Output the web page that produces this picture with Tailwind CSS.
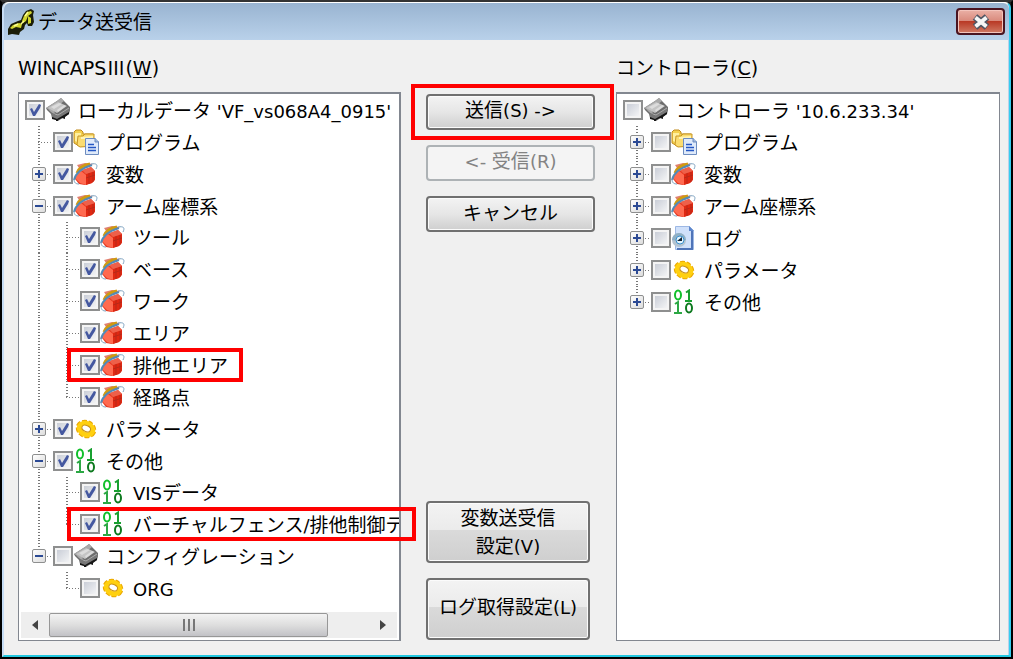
<!DOCTYPE html>
<html lang="ja">
<head>
<meta charset="utf-8">
<title>データ送受信</title>
<script src="https://cdn.jsdelivr.net/npm/@tailwindcss/browser@4"></script>
</head>
<body class="bg-[#1c1c1c] font-['Noto_Sans_CJK_JP',sans-serif] text-[19px] leading-6 text-black">

<svg class="hidden" aria-hidden="true">
  <symbol id="i-box" viewBox="0 0 26 26">
    <path d="M1 11 12 4l4-3 3 3 6 6v3l-1 4-11 7-6-3-1-4-4-4z" fill="#6d6d6d"/>
    <path d="M1 11 12 4l4-3 3 3-10 8 1 6-4-3-3-3z" fill="#a9a9a9"/>
    <path d="M3 11 13 5l9 4-10 7z" fill="#c4c4c4"/>
    <path d="M6 10l8-4 3 1-8 5zM12 13l7-5 2 1-8 6z" fill="#dcdcdc"/>
    <path d="M7 16l5 2 12-8 1 3-2 4-10 6-6-3z" fill="#777"/>
    <path d="M7 20l5 2 12-7v2l-4 3v2l-3-1-4 2v1h-2v-1l-4-1z" fill="#161616"/>
    <path d="M10 17l3 1 11-7" stroke="#aaa" fill="none"/>
  </symbol>
  <symbol id="i-folder" viewBox="0 0 26 26">
    <path d="M1 3 3 1h5l2 2v2h10v12H6l-5-3z" fill="#f4d04e" stroke="#c08a1c"/>
    <path d="M2 4h6v11l-6-3z" fill="#fff0a0"/>
    <path d="M5 7h5l2-2h9v12l-14 1-3-2z" fill="#fbdc70" stroke="#c89624"/>
    <path d="M8 8l12-1v3H8z" fill="#fff3b5"/>
    <path d="M12.500 9.500H22l3.500 3.500v12.500h-13z" fill="#dfeafa" stroke="#6d8cc0"/>
    <path d="M22 9v4h4" fill="#9fb8de" stroke="#6d8cc0"/>
    <path d="M15 15.500h6M15 18.500h8M15 21.500h8" stroke="#2457c5" stroke-width="1.500"/>
  </symbol>
  <symbol id="i-cube" viewBox="0 0 26 26">
    <path d="M4 4 12 2l8 1-5 3-9 1z" fill="#e08070"/>
    <path d="M3 15 8 10l10-4 4 4v9l-3 3-7 2-6-1-4-5z" fill="#e63a22"/>
    <path d="M3 15 8 10l5 4v10l-6-2-4-4z" fill="#ff6a50"/>
    <path d="M13 13l9-3v8l-3 4-6 2z" fill="#e02812"/>
    <path d="M16 12v11M20 11v10M13 17l9-3" stroke="#b82818" fill="none"/>
    <path d="M9 9 18 6l4 4-9 3z" fill="#ee604a"/>
    <path d="M4 12C6 7 11 4 17 3" fill="none" stroke="#cf9a10" stroke-width="3"/>
    <path d="M1 19C3 11 9 7 19 4" fill="none" stroke="#5489b5" stroke-width="2"/>
    <path d="M18 3c6-1 7 1 5 5M1 18c0 4 2 5 5 5" fill="none" stroke="#7da2c0"/>
  </symbol>
  <symbol id="i-gear" viewBox="0 0 26 26">
    <g transform="rotate(25 13 13)">
      <ellipse cx="13" cy="13" rx="8" ry="6.500" fill="none" stroke="#eba800" stroke-width="5" stroke-dasharray="4 1.500"/>
      <ellipse cx="13" cy="13" rx="7" ry="5.500" fill="#fff" stroke="#ffd010" stroke-width="5"/>
      <ellipse cx="13" cy="12.500" rx="4.500" ry="3" fill="#fff" stroke="#c99218"/>
    </g>
  </symbol>
  <symbol id="i-bits" viewBox="0 0 26 26" fill="none">
    <ellipse cx="7" cy="6" rx="3" ry="4.500" stroke="#12c02c" stroke-width="2"/>
    <path d="M15 3.500l3-2V12m-4 0h7" stroke="#18a030" stroke-width="2"/>
    <path d="M4 15l3-2v11m-4 0h8" stroke="#2ca844" stroke-width="2"/>
    <ellipse cx="18" cy="19" rx="3" ry="4.500" stroke="#0e7a20" stroke-width="2"/>
  </symbol>
  <symbol id="i-log" viewBox="0 0 26 26">
    <path d="M4.500 1.500h14l4 4v19h-18z" fill="#cfe0fa" stroke="#9db8e4"/>
    <path d="M21 6v18H6" fill="none" stroke="#4f74b8" stroke-width="2"/>
    <path d="M18 1v5h5" fill="#5d86cc"/>
    <circle cx="8" cy="15" r="7" fill="#b4c3d0"/>
    <path d="M1 15a7 7 0 0 1 14 0l-7 1z" fill="#8fb0c6"/>
    <circle cx="9" cy="15" r="4" fill="#e4f4ff" stroke="#3c92d0"/>
    <path d="M6 16l5-4v4z" fill="#102030"/>
  </symbol>
  <symbol id="i-tick" viewBox="0 0 20 20">
    <path d="M5 9l2-1 2 4 5-8 2 1-1 3-5 8H8z" fill="#4458a0"/>
  </symbol>
</svg>

<main class="flex min-h-screen flex-col border-2 border-black border-t-[#333]">
 <div class="flex flex-1 flex-col rounded-t-md border-t border-r-2 border-b-2 border-l-2 border-t-white border-r-[#35cdf0] border-b-[#22c8e0] border-l-[#c6dcf4] bg-[#f0f0f0]">
  <header class="flex h-[37px] items-center rounded-t-md bg-linear-to-b from-[#99b4d1] to-[#b9d1ea] pr-1 pl-1">
    <svg class="size-[26px]" viewBox="0 0 26 26" aria-hidden="true">
      <path d="M0 20l3-5 7-3 3-1 2-5 3-4 5-2 3 2-1 4 1 7-2 4h-4l-1-3-2 2-1 4-4 3-1 3-7-1-4 1-3-1z" fill="#1c1e08"/>
      <path d="M2 19l3-3 6-2 3 1-1 4-5-1-4 2zM14 12l2-5 3-4 4-1 1 2-4 3-2 5-3 2zM20 7l3 2v5l-3 1z" fill="#d2d630"/>
      <path d="M13 15l3-3M17 7l3-4M6 17l4-2" stroke="#fdff90" stroke-width="1.500"/>
    </svg>
    <h1 class="ml-1 flex-1 pb-0.5">データ送受信</h1>
    <button type="button" aria-label="閉じる" class="grid h-[27px] w-[49px] place-items-center rounded-sm border-2 border-[#4a1420] bg-[linear-gradient(#eab0a6,#d98a7c_48%,#b93a26_50%,#d07a64)] shadow-[inset_0_0_0_1px_#f3c4bc]">
      <svg class="h-4 w-5" viewBox="0 0 20 16" aria-hidden="true">
        <path d="M4 3l12 10M16 3L4 13" stroke="#4f5664" stroke-width="7"/>
        <path d="M4.500 3.500l11 9M15.500 3.500l-11 9" stroke="#f6f6f6" stroke-width="4"/>
      </svg>
    </button>
  </header>

  <div class="grid flex-1 grid-cols-[383fr_215fr_384fr] border-r border-[#b9d1ea] pt-[15px] pr-[8px] pb-[14px] pl-[14px]">
    <section class="flex min-w-0 flex-col">
      <h2 class="mb-[13px] h-6"><span class="font-['DejaVu_Sans',sans-serif]">WINCAPS</span>Ⅲ<span class="font-['DejaVu_Sans',sans-serif]">(<u class="underline-offset-2">W</u>)</span></h2>
      <div class="flex flex-1 flex-col border border-t-2 border-r-2 border-[#828790] bg-white">
        <ul id="local" class="flex flex-1 flex-col pl-[6px]"></ul>
        <div class="mx-0.5 mt-2 mb-0.5 flex h-[26px] items-center bg-[#eee]">
          <button type="button" aria-label="左へ" class="grid w-7 place-items-center self-stretch">
            <svg class="h-3 w-2" viewBox="0 0 8 12"><path d="M7 1v10L1 6z" fill="#444"/></svg>
          </button>
          <div class="grid h-6 w-[279px] place-items-center rounded-xs border border-[#979797] bg-linear-to-b from-[#f3f3f3] via-[#dedede] to-[#c2c2c6]">
            <div class="flex gap-[3px]"><i class="h-3 w-0.5 bg-[#777]"></i><i class="h-3 w-0.5 bg-[#777]"></i><i class="h-3 w-0.5 bg-[#777]"></i></div>
          </div>
          <button type="button" aria-label="右へ" class="ml-auto grid w-7 place-items-center self-stretch">
            <svg class="h-3 w-2" viewBox="0 0 8 12"><path d="M1 1v10l6-5z" fill="#444"/></svg>
          </button>
        </div>
      </div>
    </section>

    <div class="flex flex-col items-start pt-[39px] pb-px pl-[25px]">
      <div class="relative mb-[15px]">
        <button type="button" class="grid h-9 w-[169px] place-items-center rounded-sm border-2 border-[#707070] bg-linear-to-b from-[#f3f3f3] from-0% via-[#e6e6e6] via-50% to-[#cfcfcf] pb-1 shadow-[inset_0_0_0_1px_#fbfbfb]"><span>送信<span class="font-['DejaVu_Sans',sans-serif] text-[18px]">(S) -&gt;</span></span></button>
        <div class="pointer-events-none absolute -top-2.5 -right-[19px] -bottom-2.5 -left-[15px] border-4 border-[#f00]"></div>
      </div>
      <button type="button" disabled class="mb-[15px] grid h-9 w-[169px] place-items-center rounded-sm border-2 border-[#adb2b5] bg-[#f4f4f4] pb-1 text-[#838383]"><span><span class="font-['DejaVu_Sans',sans-serif] text-[18px]">&lt;- </span>受信<span class="font-['DejaVu_Sans',sans-serif] text-[18px]">(R)</span></span></button>
      <button type="button" class="grid h-9 w-[169px] place-items-center rounded-sm border-2 border-[#707070] bg-linear-to-b from-[#f3f3f3] from-0% via-[#e6e6e6] via-50% to-[#cfcfcf] pb-1 shadow-[inset_0_0_0_1px_#fbfbfb]"><span>キャンセル</span></button>
      <button type="button" class="mt-auto mb-[15px] h-[62px] w-[164px] rounded-sm border-2 border-[#707070] bg-[linear-gradient(#f3f3f3,#ebebeb_47%,#dadada_47%,#cfcfcf)] leading-7 shadow-[inset_0_0_0_1px_#fbfbfb]">変数送受信<br>設定<span class="font-['DejaVu_Sans',sans-serif] text-[18px]">(V)</span></button>
      <button type="button" class="h-[62px] w-[164px] rounded-sm border-2 border-[#707070] bg-[linear-gradient(#f3f3f3,#ebebeb_47%,#dadada_47%,#cfcfcf)] pb-1 whitespace-nowrap shadow-[inset_0_0_0_1px_#fbfbfb]">ログ取得設定<span class="font-['DejaVu_Sans',sans-serif] text-[18px]">(L)</span></button>
    </div>

    <section class="flex min-w-0 flex-col">
      <h2 class="mb-[13px] h-6">コントローラ<span class="font-['DejaVu_Sans',sans-serif]">(<u class="underline-offset-2">C</u>)</span></h2>
      <div class="flex-1 border border-t-2 border-[#828790] bg-white">
        <ul id="controller" class="pl-[6px]"></ul>
      </div>
    </section>
  </div>
 </div>
</main>

<script>
// Row: [guides, expander, checked, icon, text, highlight]
// Guides, one letter per level: t = branch, l = last branch, v = line passing through, s = space
const local = [
  ['', '', 1, 'box', "ローカルデータ 'VF_vs068A4_0915'"],
  ['t', '', 1, 'folder', 'プログラム'],
  ['t', '+', 1, 'cube', '変数'],
  ['t', '-', 1, 'cube', 'アーム座標系'],
  ['vt', '', 1, 'cube', 'ツール'],
  ['vt', '', 1, 'cube', 'ベース'],
  ['vt', '', 1, 'cube', 'ワーク'],
  ['vt', '', 1, 'cube', 'エリア'],
  ['vt', '', 1, 'cube', '排他エリア', 'short'],
  ['vl', '', 1, 'cube', '経路点'],
  ['t', '+', 1, 'gear', 'パラメータ'],
  ['t', '-', 1, 'bits', 'その他'],
  ['vt', '', 1, 'bits', 'VISデータ'],
  ['vl', '', 1, 'bits', 'バーチャルフェンス/排他制御デ', 'long'],
  ['l', '-', 0, 'box', 'コンフィグレーション'],
  ['sl', '', 0, 'gear', 'ORG'],
];
const controller = [
  ['', '', 0, 'box', "コントローラ '10.6.233.34'"],
  ['t', '+', 0, 'folder', 'プログラム'],
  ['t', '+', 0, 'cube', '変数'],
  ['t', '+', 0, 'cube', 'アーム座標系'],
  ['t', '+', 0, 'log', 'ログ'],
  ['t', '+', 0, 'gear', 'パラメータ'],
  ['l', '+', 0, 'bits', 'その他'],
];
const vFull = '<i class="absolute inset-y-0 left-[13px] w-0.5 bg-[repeating-linear-gradient(to_bottom,#777_0_1px,transparent_1px_3px)]"></i>';
const vHalf = '<i class="absolute top-0 bottom-1/2 left-[13px] w-0.5 bg-[repeating-linear-gradient(to_bottom,#777_0_1px,transparent_1px_3px)]"></i>';
const across = '<i class="absolute top-1/2 right-0 left-[13px] h-px bg-[repeating-linear-gradient(to_right,#777_0_1px,transparent_1px_3px)]"></i>';
const lines = { t: vFull + across, l: vHalf + across, v: vFull, s: '' };
const boxes = {
  short: '<div class="pointer-events-none absolute -inset-y-px left-[42px] w-[176px] border-4 border-[#f00]"></div>',
  long: '<div class="pointer-events-none absolute -inset-y-px -right-[17px] left-[42px] border-4 border-[#f00]"></div>',
};
// Latin runs are set in their own face beside the Japanese text
const latin = text => text.replace(/[ -~]+/g, run => `<span class="font-['DejaVu_Sans',sans-serif] text-[18px] leading-none">${run}</span>`);
function expander(sign) {
  if (!sign) return '';
  const path = sign === '+' ? 'M3 7h8M7 3v8' : 'M3 7h8';
  return `<button type="button" aria-label="${sign === '+' ? '展開' : '折りたたみ'}" class="absolute inset-x-[7px] inset-y-0 my-auto h-3.5 rounded-xs border border-[#8e8f8f] bg-linear-to-br from-white to-[#dcdcdc]"><svg class="-m-px size-3.5" viewBox="0 0 14 14"><path d="${path}" stroke="#2c4a94" stroke-width="2"/></svg></button>`;
}
function row([guides, sign, checked, icon, text, mark], size) {
  const cells = [...guides].map((g, i) =>
    `<span class="relative ${i ? 'w-[27px]' : 'w-7'} shrink-0 self-stretch">${lines[g]}${i === guides.length - 1 ? expander(sign) : ''}</span>`).join('');
  return `<li class="relative flex items-center ${size}">${cells}
    <label class="flex min-w-0 flex-1 items-center">
      <span class="grid size-5 shrink-0">
        <input type="checkbox" ${checked ? 'checked' : ''} class="peer col-start-1 row-start-1 size-5 appearance-none border-2 border-[#8e8f8f] bg-linear-to-br from-[#c3c8d2] to-[#fafafa] shadow-[inset_0_0_0_2px_#f4f4f4]">
        <svg class="pointer-events-none invisible col-start-1 row-start-1 size-5 peer-checked:visible"><use href="#i-tick"/></svg>
      </span>
      <svg class="size-[26px] shrink-0"><use href="#i-${icon}"/></svg>
      <span class="ml-[7px] min-w-0 flex-1 whitespace-nowrap ${mark === 'long' ? 'overflow-x-clip' : ''}">${latin(text)}</span>
    </label>${mark ? boxes[mark] : ''}</li>`;
}
document.getElementById('local').innerHTML = local.map(r => row(r, 'min-h-7 flex-1')).join('');
document.getElementById('controller').innerHTML = controller.map(r => row(r, 'h-8')).join('');
</script>
</body>
</html>
